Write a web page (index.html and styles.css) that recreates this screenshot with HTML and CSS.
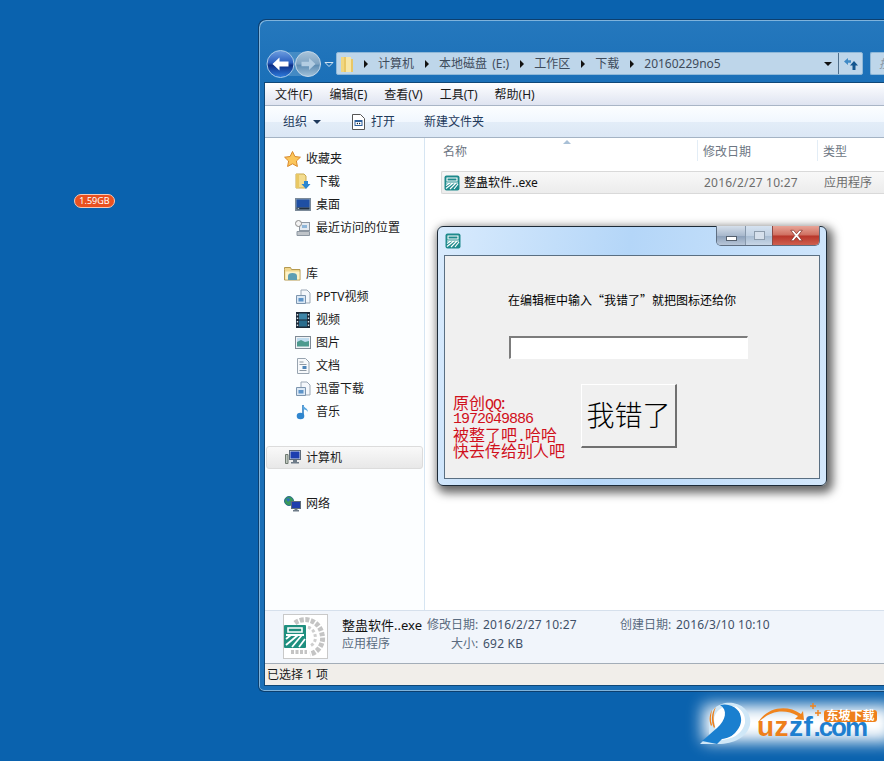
FILE: index.html
```html
<!DOCTYPE html>
<html lang="zh-CN">
<head>
<meta charset="utf-8">
<title>整蛊软件</title>
<link rel="stylesheet" href="styles.css">
</head>
<body>
<svg class="defs" aria-hidden="true">
  <defs>
    <linearGradient id="g-back" x1="0" y1="0" x2="0" y2="1">
      <stop offset="0" stop-color="#6f9fe0"/><stop offset=".45" stop-color="#2a5fc0"/><stop offset=".55" stop-color="#0d2f86"/><stop offset="1" stop-color="#2f7ee0"/>
    </linearGradient>
    <linearGradient id="g-fwd" x1="0" y1="0" x2="0" y2="1">
      <stop offset="0" stop-color="#a9c4da"/><stop offset=".5" stop-color="#7ea3c2"/><stop offset=".55" stop-color="#5f8db3"/><stop offset="1" stop-color="#a2c2da"/>
    </linearGradient>
    <symbol id="i-yi" viewBox="0 0 16 16">
      <rect x="0.5" y="0.5" width="15" height="15" rx="2" fill="#1e8a8c"/>
      <path d="M3 3h10v3H3z" fill="none" stroke="#fff" stroke-width="1.1"/>
      <path d="M2 8h12M2 10.500l4-2.500M2 13.500l7-5.500M6 14l6-6M10 14l4-5" fill="none" stroke="#fff" stroke-width="1.200"/>
    </symbol>
    <symbol id="i-doc" viewBox="0 0 16 16">
      <path d="M6 1h6l3 3v10H6z" fill="#f4f7fb" stroke="#9aa7b5"/>
      <path d="M1.500 6.500h9v8h-9z" fill="#dbe8f5" stroke="#7d95ae"/>
      <path d="M3.500 9h5v3.500h-5z" fill="#5d94c9"/>
    </symbol>
  </defs>
</svg>

<div class="badge">1.59GB</div>

<main class="explorer">
  <header class="glass">
    <div class="nav">
      <svg width="70" height="30" viewBox="0 0 70 30">
        <path d="M15 3h27a12 12 0 0 1 0 24H15z" fill="#6aa3cf" opacity=".5"/>
        <circle cx="14.500" cy="15" r="13.500" fill="url(#g-back)" stroke="#a9cbe8" stroke-width="1"/>
        <path d="M6.500 15l7-6.500v4h9v5h-9v4z" fill="#fff"/>
        <circle cx="42" cy="15" r="12.500" fill="url(#g-fwd)" stroke="#c3d8ea" stroke-width="1"/>
        <path d="M49.500 15l-6.500-6v3.800h-7.500v4.400H43v3.800z" fill="#b3cde2"/>
        <path d="M59 13.500h8l-4 4z" fill="#1b70b8" stroke="#d2e3f1"/>
      </svg>
    </div>
    <div class="address">
      <svg class="folder" width="15" height="18" viewBox="0 0 15 18"><path d="M1 2h6l1 2h5v13H1z" fill="#e9c765"/><path d="M6 2h5v15H6z" fill="#f8e6a6"/><path d="M1 2h3v15H1z" fill="#f1d67f"/></svg>
      <span class="crumb-arrow first"></span><span class="crumb">计算机</span>
      <span class="crumb-arrow"></span><span class="crumb">本地磁盘 (E:)</span>
      <span class="crumb-arrow"></span><span class="crumb">工作区</span>
      <span class="crumb-arrow"></span><span class="crumb">下载</span>
      <span class="crumb-arrow"></span><span class="crumb">20160229no5</span>
      <span class="drop"></span>
      <span class="refresh">
        <svg width="16" height="14" viewBox="0 0 16 14"><path d="M1 4.500L5 1v2.300h3v2.500H5V8z" fill="#3f8ac6"/><path d="M7 8.500L11 4l4 4.500h-2.500V13h-3V8.500z" fill="#14568f"/></svg>
      </span>
    </div>
    <div class="search"><span class="search-text">搜</span></div>
  </header>

  <div class="pane">
    <nav class="menubar">
      <span>文件(F)</span><span>编辑(E)</span><span>查看(V)</span><span>工具(T)</span><span>帮助(H)</span>
    </nav>
    <div class="toolbar">
      <span class="tool">组织<i class="tool-caret"></i></span>
      <span class="tool tool-open">
        <svg width="15" height="16" viewBox="0 0 15 16"><path d="M1.500.5h8l4 4v11h-12z" fill="#fff" stroke="#555"/><path d="M3.500 6h8v6h-8z" fill="#2d5f9b"/><path d="M4.500 8h6v3h-6z" fill="#fff"/><path d="M5.500 9.500l1.500-1v2zM9.500 9.500L8 8.500v2z" fill="#222"/></svg>
        打开
      </span>
      <span class="tool tool-new">新建文件夹</span>
    </div>

    <div class="body">
      <aside class="sidebar">
        <ul class="group">
          <li class="head">
            <svg width="17" height="16" viewBox="0 0 17 16"><path d="M8.500 .5l2.400 5 5.500.7-4 3.800 1 5.500-4.900-2.700L3.600 15.500l1-5.500-4-3.800 5.500-.7z" fill="#fbc65b" stroke="#d8892c"/></svg>
            收藏夹
          </li>
          <li>
            <svg width="16" height="17" viewBox="0 0 16 17"><path d="M1 1h8l2 2v12H1z" fill="#f3dc8f" stroke="#c9a94f"/><path d="M1 1h3v14H1z" fill="#e9c864"/><path d="M9 8h4v3h2.500l-4.500 5-4.500-5H9z" fill="#2a86d2"/></svg>
            下载
          </li>
          <li>
            <svg width="16" height="14" viewBox="0 0 16 14"><rect x=".5" y=".5" width="15" height="12" fill="#8ba0b4" stroke="#7b8a99"/><path d="M1.500 1.500h13v8h-13z" fill="#1f4fa3"/><path d="M1.500 9.500h13v2h-13z" fill="#22303f"/><path d="M2 11l1.500-1 1 1z" fill="#cfe0ef"/></svg>
            桌面
          </li>
          <li>
            <svg width="16" height="16" viewBox="0 0 16 16"><rect x="4.500" y="2.500" width="10" height="8" fill="#e4eaf0" stroke="#8d97a2"/><rect x="7" y="5" width="5" height="3" fill="#8fb6d8"/><circle cx="3.500" cy="3.500" r="3" fill="#f3f3f3" stroke="#8a8a8a"/><path d="M2 11.500h12.500v4H2z" fill="#bfc4c9" stroke="#8d97a2"/></svg>
            最近访问的位置
          </li>
        </ul>
        <ul class="group">
          <li class="head">
            <svg width="17" height="15" viewBox="0 0 17 15"><path d="M.5 3.500V1.500h6l1 2h8.500v10.500H.5z" fill="#f0d68c" stroke="#b59a50"/><path d="M1.500 5.500h14v8h-14z" fill="#fdf3c8"/><path d="M4 14v-4a4.500 3 0 0 1 9 0v4z" fill="#5f9fb3"/></svg>
            库
          </li>
          <li><svg width="16" height="16"><use href="#i-doc"/></svg>PPTV视频</li>
          <li>
            <svg width="16" height="16" viewBox="0 0 14 16"><rect width="14" height="16" fill="#1c2a38"/><path d="M3 1.500h8v6H3z" fill="#3e86a8"/><path d="M3 8.500h8v6H3z" fill="#2a6d8e"/><path d="M.8 2h1.400v1.500H.8zM.8 5.500h1.400V7H.8zM.8 9h1.400v1.500H.8zM.8 12.500h1.400V14H.8zM11.800 2h1.400v1.500h-1.400zM11.800 5.500h1.400V7h-1.400zM11.800 9h1.400v1.500h-1.400zM11.800 12.500h1.400V14h-1.400z" fill="#d8e2ea"/></svg>
            视频
          </li>
          <li>
            <svg width="16" height="13" viewBox="0 0 16 13"><rect x=".5" y=".5" width="15" height="12" fill="#f0f3f6" stroke="#7f8b96"/><path d="M2 2h12v5H2z" fill="#bfdcef"/><path d="M2 6l4-2 4 2 4-1v5.500H2z" fill="#4d9a8e"/></svg>
            图片
          </li>
          <li>
            <svg width="16" height="16" viewBox="0 0 14 16"><path d="M1.500 .5h8l3.500 3.500v11.500H1.500z" fill="#f7f9fb" stroke="#98a4b0"/><path d="M3.500 4h4M3.500 6.500h7M3.500 12.500h7" stroke="#8d98a3"/><path d="M6.500 8h4v3h-4z" fill="#4d84b8"/></svg>
            文档
          </li>
          <li><svg width="16" height="16"><use href="#i-doc"/></svg>迅雷下载</li>
          <li>
            <svg width="16" height="16" viewBox="0 0 14 16"><path d="M7 1v10.500" stroke="#2f7fc4" stroke-width="1.600" fill="none"/><path d="M7 1c1 3 5 3 5 7-1-2-3-2.500-5-3z" fill="#56a6e0"/><ellipse cx="4.500" cy="12" rx="3.800" ry="3.300" fill="#2f86cf"/></svg>
            音乐
          </li>
        </ul>
        <ul class="group">
          <li class="head current">
            <svg width="16" height="15" viewBox="0 0 16 15"><path d="M.5 4.500h2.500v9H.5z" fill="#bfc7c0" stroke="#6f7a70"/><rect x="4.500" y=".5" width="11" height="9" fill="#d5dde5" stroke="#5f6d7a"/><path d="M5.500 1.500h9v7h-9z" fill="#1d3fb0"/><path d="M8 10h4v2h2v1.500H6V12h2z" fill="#6d7b88"/></svg>
            计算机
          </li>
        </ul>
        <ul class="group">
          <li class="head">
            <svg width="17" height="16" viewBox="0 0 17 16"><circle cx="5" cy="5" r="4.500" fill="#3a9a5a" stroke="#2a6e8a"/><path d="M2 3l3-1 1 2-2 2zM6 6l2 1-1 2z" fill="#2e6fc0"/><rect x="7.500" y="5.500" width="9" height="7" fill="#1f3fae" stroke="#5f6d7a"/><path d="M10.500 12.500h3v1.500h1.500v1.500h-6V14h1.500z" fill="#6d7b88"/></svg>
            网络
          </li>
        </ul>
      </aside>

      <section class="files">
        <div class="colhead">
          <span class="col col-name">名称<i class="sort"></i></span>
          <span class="col col-date">修改日期</span>
          <span class="col col-type">类型</span>
        </div>
        <div class="filerow">
          <span class="cell cell-name"><svg width="16" height="16"><use href="#i-yi"/></svg><b>整蛊软件..exe</b></span>
          <span class="cell cell-date">2016/2/27 10:27</span>
          <span class="cell cell-type">应用程序</span>
        </div>
      </section>
    </div>

    <div class="details">
      <div class="thumb">
        <svg width="45" height="45" viewBox="0 0 45 45">
          <rect x=".5" y=".5" width="44" height="44" fill="#fff" stroke="#c9c9c9"/>
          <path d="M12 9a17 17 0 0 1 27 11 16 16 0 0 1-12 20" fill="none" stroke="#c4c4c4" stroke-width="5" stroke-dasharray="4 1.500"/>
          <path d="M20 13a10 10 0 0 1 12 8 9 9 0 0 1-5 11" fill="none" stroke="#cfcfcf" stroke-width="3" stroke-dasharray="3 2"/>
          <path d="M8 38h16" stroke="#c4c4c4" stroke-width="4" stroke-dasharray="3 1.500"/>
          <rect x="1" y="11" width="22" height="23" rx="1" fill="#1f8f7f"/>
          <path d="M5 14h14v4H5z" fill="none" stroke="#fff" stroke-width="1.600"/>
          <path d="M3 21h18M3 25l5-4M3 31l12-10M9 33l10-12M16 33l6-8" fill="none" stroke="#fff" stroke-width="1.800"/>
        </svg>
      </div>
      <dl class="meta">
        <dt class="m-name">整蛊软件..exe</dt>
        <dt class="m-label">修改日期:</dt><dd>2016/2/27 10:27</dd>
        <dt class="m-label">创建日期:</dt><dd>2016/3/10 10:10</dd>
        <dt class="m-type">应用程序</dt>
        <dt class="m-label">大小:</dt><dd>692 KB</dd>
      </dl>
    </div>
    <footer class="status">已选择 1 项</footer>
  </div>
</main>

<section class="dialog">
  <div class="dlg-title">
    <svg class="dlg-icon" width="16" height="16"><use href="#i-yi"/></svg>
    <div class="caption">
      <span class="cap cap-min"><i></i></span>
      <span class="cap cap-max"><i></i></span>
      <span class="cap cap-close">
        <svg width="15" height="13" viewBox="0 0 13 11"><path d="M1.500 1h2.500l2.500 3 2.500-3h2.500L8 5.500l3.500 4.500H9L6.500 7 4 10H1.500L5 5.500z" fill="#fff" stroke="#7d2a22" stroke-width=".6"/></svg>
      </span>
    </div>
  </div>
  <div class="client">
    <p class="prompt">在编辑框中输入“我错了”就把图标还给你</p>
    <input class="edit" type="text" aria-label="输入">
    <div class="dlg-bottom">
      <p class="redtext">
        <span class="line">原创<span class="asc">QQ</span>:</span>
        <span class="line line-num asc">1972049886</span>
        <span class="line">被整了吧<span class="asc">.</span>哈哈</span>
        <span class="line">快去传给别人吧</span>
      </p>
      <button class="sorry" type="button">我错了</button>
    </div>
  </div>
</section>

<aside class="logo">
  <svg class="logo-mark" width="70" height="60" viewBox="0 0 70 60">
    <path d="M17 30C16 17 29 9 41 11c13 2 19 13 17 22-3 12-16 19-32 19H8l9-9z" fill="#cfe7f7"/>
    <path d="M22 28C22 19 31 13 40 14c9 1 14 9 13 17-2 10-13 17-26 17H14l10-9z" fill="#fff"/>
    <path d="M28 13c13-3 22 7 22 15 0 10-10 18-20 19l-5 5-15-3 15-13c9-8 11-18 3-23z" fill="#1a7fcf"/>
    <path d="M42 13c10 5 14 17 6 27-3 3-7 6-11 6 9-6 13-14 12-20-1-6-3-10-7-13z" fill="#fff"/>
    <path d="M24 15c-5 5-5 15-2 21l1-1c-2-7-2-14 1-20zM20 18c-3 5-3 11-1 16l1-1c-2-5-1-10 0-15z" fill="#ee7f1b"/>
  </svg>
  <svg class="logo-arc" width="66" height="22" viewBox="0 0 66 22"><path d="M1 21C8 7 28 1 44 12l2-3 1 9-9-1 3-3C27 6 12 9 1 21z" fill="#f0841e"/><path d="M53 4h6M56 1v6M58 11h6M61 8v6" stroke="#f0841e" stroke-width="1.400"/></svg>
  <div class="logo-text"><span class="lt-orange">uz</span><span class="lt-blue">zf</span><span class="lt-com">.com</span></div>
  <div class="logo-badge">东坡下载</div>
</aside>
</body>
</html>
```

FILE: styles.css
```css
* { box-sizing: border-box; }
html, body { margin: 0; height: 100%; }
body {
  position: relative;
  width: 884px;
  height: 761px;
  overflow: hidden;
  background: #0a62ae;
  font-family: "Noto Sans", "Noto Sans CJK SC", sans-serif;
  font-size: 12px;
  line-height: 16px;
  color: #1a1a1a;
}
ul, dl, dd, dt, p { margin: 0; padding: 0; }
ul { list-style: none; }
svg { display: block; flex: none; }
.defs { position: absolute; width: 0; height: 0; }

.badge {
  position: absolute;
  left: 74px;
  top: 194px;
  width: 41px;
  height: 14px;
  border: 1px solid #f6c9b6;
  border-radius: 7px;
  background: #ea5120;
  color: #fff;
  font-size: 9px;
  line-height: 12px;
  text-align: center;
}

/* Explorer window */
.explorer {
  position: absolute;
  left: 258px;
  top: 19px;
  width: 626px;
  height: 673px;
  display: flex;
  flex-direction: column;
  padding: 0 0 5px 5px;
  border: 1px solid #0c3f6f;
  border-right: 0;
  border-radius: 8px 0 0 6px;
  background: linear-gradient(180deg, #2578bd 0, #1b70b8 60px);
  box-shadow: inset 1px 1px 0 #7fb3dc, inset 0 -1px 0 #7fb3dc;
}
.glass {
  position: relative;
  height: 62px;
  flex: none;
  display: flex;
  align-items: flex-end;
  padding: 0 0 7px 2px;
}
.nav { width: 70px; height: 30px; margin-bottom: -4px; flex: none; }
.address {
  width: 527px;
  height: 23px;
  flex: none;
  display: flex;
  align-items: center;
  padding-left: 3px;
  border: 1px solid #8fb8d8;
  border-radius: 2px;
  background: #bed6ea;
  color: #3e4c5c;
}
.folder { margin-right: 9px; }
.crumb-arrow {
  width: 0;
  height: 0;
  margin: 0 10px 0 11px;
  border-left: 4px solid #111;
  border-top: 4px solid transparent;
  border-bottom: 4px solid transparent;
}
.crumb-arrow.first { margin-left: 0; }
.crumb { white-space: nowrap; word-spacing: 2px; }
.drop {
  width: 0;
  height: 0;
  margin-left: auto;
  margin-right: 6px;
  border-top: 4px solid #111;
  border-left: 4px solid transparent;
  border-right: 4px solid transparent;
}
.refresh {
  width: 24px;
  height: 21px;
  display: flex;
  align-items: center;
  justify-content: center;
  border-left: 1px solid #4f6f8c;
}
.search {
  flex: 1;
  min-width: 0;
  height: 23px;
  margin-left: 7px;
  padding-left: 8px;
  border: 1px solid #8fb8d8;
  border-right: 0;
  border-radius: 2px 0 0 2px;
  background: #bed6ea;
  color: #8b9aa8;
  line-height: 21px;
  overflow: hidden;
}
.search-text { font-style: italic; }

.pane {
  flex: 1;
  min-height: 0;
  display: flex;
  flex-direction: column;
  background: #fff;
  border: 1px solid #0f4777;
  border-right: 0;
}
.menubar {
  height: 23px;
  flex: none;
  display: flex;
  gap: 17px;
  padding: 2px 0 0 10px;
  align-items: center;
  background: linear-gradient(180deg, #fff 0, #f4f6fb 30%, #dfe4f1 100%);
  border-bottom: 1px solid #a9b5c6;
}
.toolbar {
  height: 32px;
  flex: none;
  display: flex;
  align-items: center;
  padding-left: 18px;
  color: #1e395b;
  background: linear-gradient(180deg, #fcfeff 0, #f1f7fe 50%, #e3edf8 52%, #dbe7f5 100%);
  border-bottom: 1px solid #a4b3c4;
}
.tool { display: flex; align-items: center; white-space: nowrap; }
.tool-caret {
  width: 0;
  height: 0;
  margin-left: 6px;
  border-top: 4px solid #1e395b;
  border-left: 4px solid transparent;
  border-right: 4px solid transparent;
}
.tool-open { gap: 5px; margin-left: 30px; }
.tool-new { margin-left: 29px; }

.body { flex: 1; min-height: 0; display: flex; }
.sidebar {
  width: 160px;
  flex: none;
  padding-top: 9px;
  background: #fcfeff;
  border-right: 1px solid #d6e5f2;
}
.group { margin-bottom: 23px; }
.group li {
  height: 23px;
  display: flex;
  align-items: center;
  gap: 5px;
  padding-left: 30px;
  white-space: nowrap;
}
.group li.head { padding-left: 19px; gap: 5px; }
.current {
  margin: 0 1px;
  padding-left: 18px !important;
  border: 1px solid #dcdcdc;
  border-radius: 3px;
  background: linear-gradient(180deg, #f9f9f9, #e8e8e8);
}

.files { flex: 1; min-width: 0; padding-left: 16px; }
.colhead {
  position: relative;
  height: 25px;
  display: flex;
  color: #6d7683;
  line-height: 27px;
}
.col { position: relative; padding-left: 2px; }
.col-name { width: 256px; }
.col-date { width: 120px; padding-left: 6px; }
.col-type { padding-left: 6px; }
.col-date::before, .col-type::before {
  content: "";
  position: absolute;
  left: 0;
  top: 2px;
  height: 21px;
  width: 1px;
  background: #e3edf6;
}
.sort {
  position: absolute;
  left: 122px;
  top: 2px;
  width: 0;
  height: 0;
  border-bottom: 4px solid #a9c0d6;
  border-left: 4px solid transparent;
  border-right: 4px solid transparent;
}
.filerow {
  height: 23px;
  margin-top: 8px;
  display: flex;
  align-items: center;
  color: #6d6d6d;
  border: 1px solid #d9d9d9;
  border-right: 0;
  border-radius: 2px 0 0 2px;
  background: linear-gradient(180deg, #f8f8f8, #ececec);
}
.cell { white-space: nowrap; }
.cell-name { width: 262px; display: flex; align-items: center; gap: 4px; padding-left: 2px; }
.cell-name b { font-weight: 400; color: #111; }
.cell-date { width: 120px; letter-spacing: .2px; }

.details {
  height: 53px;
  flex: none;
  display: flex;
  padding: 3px 0 0 18px;
  background: #f1f5fb;
  border-top: 1px solid #d6e0ec;
}
.meta {
  margin-left: 14px;
  padding-top: 3px;
  display: grid;
  grid-template-columns: 85px 56px 137px 56px 100px;
  grid-auto-rows: 19px;
  color: #3f5068;
  white-space: nowrap;
}
.meta dd { letter-spacing: .2px; }
.m-name { color: #111; font-size: 13px; }
.m-type { color: #5a6b80; grid-column: 1; }
.m-label { color: #5a6b80; text-align: left; }
.m-type + .m-label { padding-left: 24px; }

.status {
  height: 22px;
  flex: none;
  padding-left: 2px;
  line-height: 21px;
  background: #f1eeea;
  border-top: 1px solid #a3adb8;
}

/* Dialog */
.dialog {
  position: absolute;
  left: 437px;
  top: 226px;
  width: 390px;
  height: 260px;
  display: flex;
  flex-direction: column;
  padding: 0 6px 6px 6px;
  border: 1px solid #1d2b38;
  border-radius: 6px;
  background: linear-gradient(100deg, #d9ebfd 0, #b4d6f8 45%, #d4e8fc 100%);
  box-shadow: 3px 4px 10px 3px rgba(0, 0, 0, .6);
}
.dlg-title { height: 28px; flex: none; position: relative; }
.dlg-icon { position: absolute; left: 1px; top: 6px; }
.caption {
  position: absolute;
  right: 0;
  top: -1px;
  display: flex;
  height: 20px;
  border: 1px solid #5f6f82;
  border-top: 0;
  border-radius: 0 0 5px 5px;
  overflow: hidden;
}
.cap { display: flex; align-items: center; justify-content: center; }
.cap-min { width: 28px; background: linear-gradient(180deg, #d5dfeb 0, #a9b9cd 50%, #8ea2bb 55%, #b8c6d8 100%); }
.cap-min i { width: 11px; height: 5px; margin-top: 5px; background: #fff; border: 1px solid #55606e; }
.cap-max { width: 27px; border-left: 1px solid #8899ac; background: linear-gradient(180deg, #d5e2f0 0, #c0d0e2 50%, #a9bdd3 55%, #c8d6e6 100%); }
.cap-max i { width: 11px; height: 9px; border: 1px solid #8d9cac; background: #d6e0ec; }
.cap-close { width: 47px; border-left: 1px solid #8c4a44; background: linear-gradient(180deg, #e8a598 0, #cf6f60 48%, #b8362a 52%, #cf5f4e 100%); }
.client {
  flex: 1;
  min-height: 0;
  display: flex;
  flex-direction: column;
  background: #f0f0f0;
  border: 1px solid #5a6f82;
}
.prompt {
  margin: 35px 0 0 63px;
  color: #000;
  font-family: "Noto Sans CJK SC", sans-serif;
  line-height: 17px;
  white-space: nowrap;
}
.edit {
  flex: none;
  width: 239px;
  height: 23px;
  margin: 28px 0 0 64px;
  padding: 0;
  background: #fff;
  border-style: solid;
  border-width: 2px 1px 1px 2px;
  border-color: #7c7c7c #fff #fff #7c7c7c;
  outline: 0;
}
.dlg-bottom { display: flex; align-items: flex-start; margin-top: 25px; }
.redtext {
  width: 128px;
  margin: 10px 0 0 8px;
  color: #d0101c;
  font-family: "Noto Sans CJK SC", sans-serif;
  font-size: 16px;
  font-weight: 400;
  white-space: nowrap;
}
.line { display: block; height: 16px; line-height: 16px; }
.line-num { line-height: 20px; }
.asc {
  font-family: "Liberation Mono", monospace;
  font-size: 15px;
  letter-spacing: -1px;
}
.sorry {
  width: 96px;
  height: 64px;
  padding: 0 0 4px;
  background: #f0f0f0;
  color: #000;
  font-family: "Noto Sans CJK SC", sans-serif;
  font-size: 28px;
  font-weight: 300;
  border-style: solid;
  border-width: 1px 2px 2px 1px;
  border-color: #fff #707070 #707070 #fff;
}

/* Watermark */
.logo {
  position: absolute;
  left: 697px;
  top: 696px;
  width: 187px;
  height: 56px;
}
.logo::before {
  content: "";
  position: absolute;
  left: 6px;
  right: -10px;
  top: 9px;
  bottom: 10px;
  background: #fff;
  filter: blur(8px);
}
.logo-mark { position: absolute; left: -5px; top: -4px; }
.logo-text {
  position: absolute;
  left: 60px;
  top: 26px;
  height: 10px;
  font-family: "Liberation Sans", sans-serif;
  font-size: 28px;
  font-weight: 700;
  line-height: 10px;
  letter-spacing: .5px;
  white-space: nowrap;
}
.lt-orange { color: #ee7f1b; }
.lt-blue { color: #1e7fd0; }
.lt-com { color: #1e7fd0; font-size: 26px; letter-spacing: -2px; }
.logo-arc { position: absolute; left: 60px; top: 6px; }
.logo-badge {
  position: absolute;
  left: 127px;
  top: 14px;
  width: 53px;
  height: 12px;
  border-radius: 3px;
  background: #ee7f1b;
  color: #fff;
  font-size: 12px;
  font-weight: 700;
  line-height: 12px;
  text-align: center;
  white-space: nowrap;
}
```
